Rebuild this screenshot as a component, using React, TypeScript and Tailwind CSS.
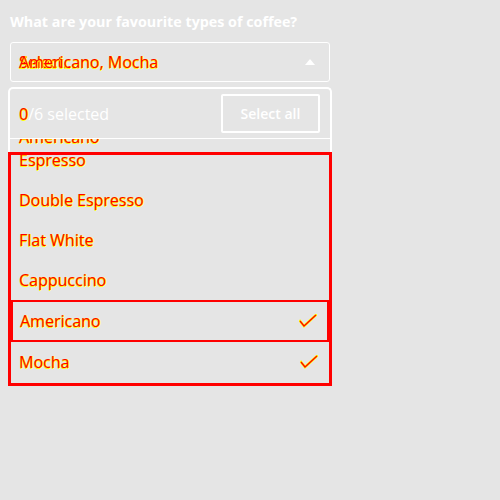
import { useState } from 'react';

const glitch = 'text-[#ff0000] [text-shadow:1px_0_#ffff00,0_1px_#ffff00]';

const options = [
  { label: 'Espresso', checked: false },
  { label: 'Double Espresso', checked: false },
  { label: 'Flat White', checked: false },
  { label: 'Cappuccino', checked: false },
  { label: 'Americano', checked: true },
  { label: 'Mocha', checked: true },
];

function Check() {
  return (
    <svg width="18" height="14" viewBox="0 0 18 14" fill="none" className="flex-shrink-0">
      <polyline points="1,7 5,12 17,1" stroke="#ffff00" strokeWidth="2.6" strokeLinecap="square" />
      <polyline points="1,7 5,12 17,1" stroke="#ff0000" strokeWidth="1.3" />
    </svg>
  );
}

export default function App() {
  const [items] = useState(options);

  return (
    <div className="min-h-screen w-[500px] bg-[#e5e5e5] px-[10px] pt-[12px] font-['Open_Sans',sans-serif]">
      {/* Question */}
      <p className="text-[14.3px] leading-5 font-bold text-white mb-[10px]">
        What are your favourite types of coffee?
      </p>

      {/* Select control */}
      <div className="w-[320px] h-[40px] border border-white rounded-[3px] flex items-center pl-[8px] pr-[14px]">
        <div className={`grid flex-1 text-[16px] leading-6 ${glitch}`}>
          <span className="[grid-area:1/1]">Select...</span>
          <span className="[grid-area:1/1]">Americano, Mocha</span>
        </div>
        <svg width="10" height="6" viewBox="0 0 10 6">
          <polygon points="0,6 5,0 10,6" fill="white" />
        </svg>
      </div>

      {/* Dropdown */}
      <div className="mt-[5px] -ml-[2px] w-[324px] border-2 border-b-0 border-white rounded-t-[5px]">
        <div className="flex items-center justify-between pl-[9px] pr-[10px] py-[5px] border-b border-white">
          <span className="text-[16px] leading-6 text-white">
            <span className={glitch}>0</span>/6 selected
          </span>
          <button className="w-[99px] h-[39px] border-2 border-white rounded-[2px] text-[14px] font-semibold text-white">
            Select all
          </button>
        </div>

        <div className="h-[13px] overflow-hidden pl-[9px]">
          <div className={`-mt-[12px] text-[16px] leading-5 ${glitch}`}>Americano</div>
        </div>

        {/* Options list */}
        <div className="-mx-[2px] h-[234px] border-[3px] border-[#ff0000] overflow-hidden">
          <ul className="-mt-[15px]">
            {items.map((item) => (
              <li
                key={item.label}
                className={
                  item.label === 'Americano'
                    ? 'h-[42px] border-2 border-[#ff0000] pl-[7px] pr-[10px] flex items-center justify-between'
                    : 'h-[40px] px-[8px] pr-[11px] flex items-center justify-between'
                }
              >
                <span className={`text-[16px] leading-6 ${glitch}`}>{item.label}</span>
                {item.checked && <Check />}
              </li>
            ))}
          </ul>
        </div>
      </div>
    </div>
  );
}
